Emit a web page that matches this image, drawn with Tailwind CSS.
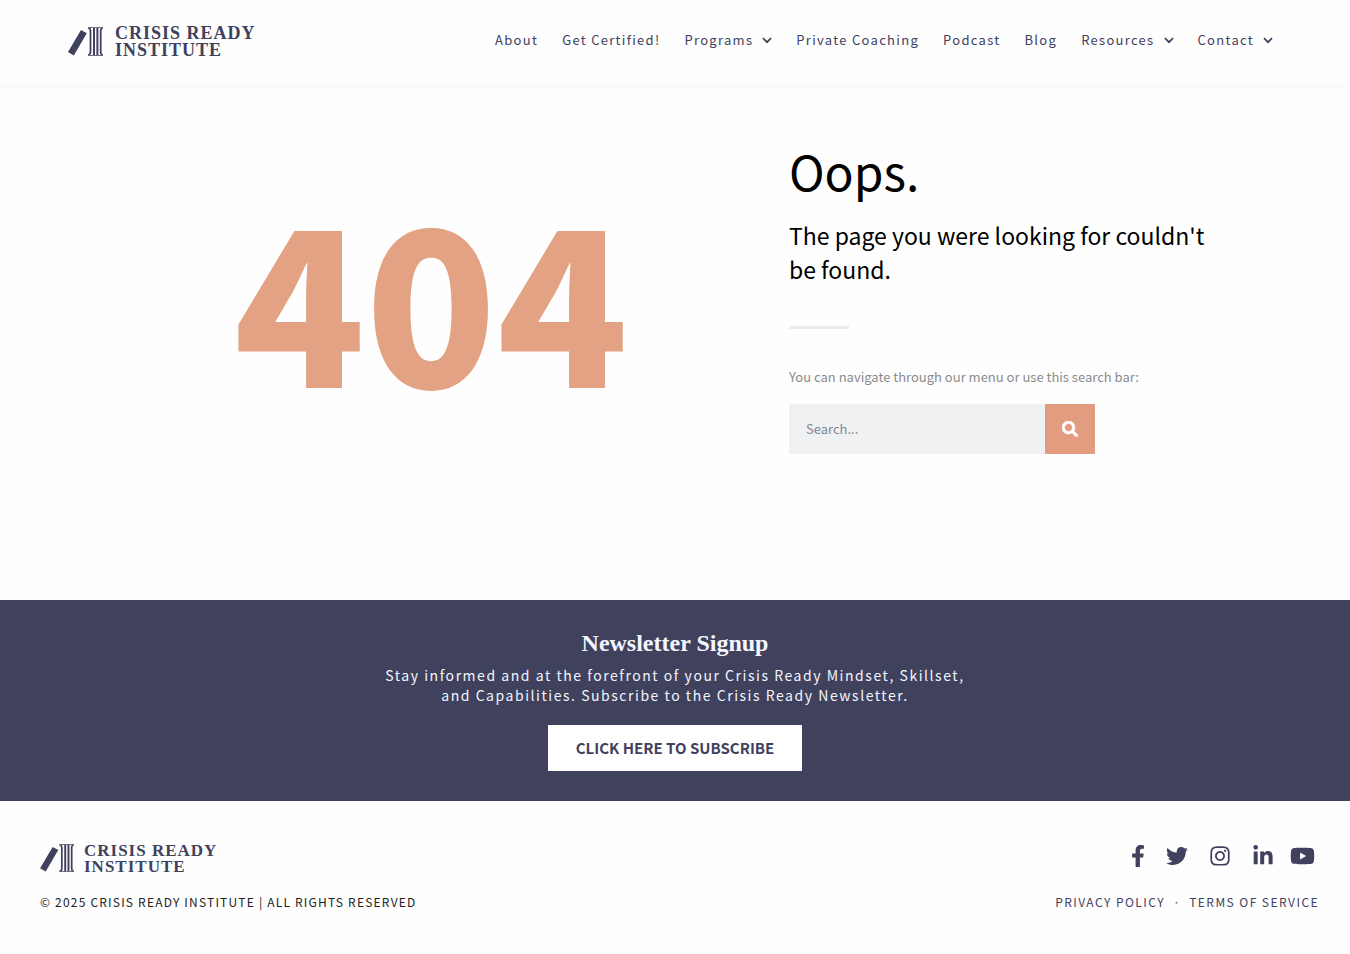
<!DOCTYPE html>
<html lang="en">
<head>
    <meta charset="UTF-8">
    <meta name="viewport" content="width=device-width, initial-scale=1.0">
    <title>Page not found - Crisis Ready Institute</title>
    <script src="https://cdn.jsdelivr.net/npm/@tailwindcss/browser@4"></script>
</head>
<body class="bg-[#fefefe] font-['Noto_Sans_CJK_JP','Noto_Sans',sans-serif] text-[#3f415d]">
    <svg class="hidden">
        <symbol id="pillar" viewBox="0 0 35 29">
            <path d="M13 3L18.800 6.300L5.800 28.500L0 25Z" fill="#3f415d"/>
            <path d="M20 .5Q22.500 1 22.500 4V25Q22.500 28 20 28.500M35 .5Q32.700 1 32.700 4V25Q32.700 28 35 28.500" stroke="#3f415d" stroke-width="1.800" fill="none"/>
            <path d="M26 0V29M29.400 0V29" stroke="#3f415d" stroke-width="2" fill="none"/>
            <path d="M20 .5H35M20 28.500H35" stroke="#6b6c84" stroke-width="1" fill="none"/>
        </symbol>
        <symbol id="chevron" viewBox="0 0 10 7">
            <path d="M1 1.200L5 5.200L9 1.200" stroke="currentColor" stroke-width="1.700" fill="none"/>
        </symbol>
    </svg>

    <header class="flex items-center justify-between h-[82px] pl-[68px] pr-[77px] shadow-[0_6px_0_#fbfbfb]">
        <a href="#" class="flex items-center gap-3">
            <svg class="w-[35px] h-[29px]"><use href="#pillar"/></svg>
            <span class="pt-0.5 font-['Liberation_Serif',serif] font-bold text-[18px] leading-[17px] tracking-[1px]">CRISIS READY<br>INSTITUTE</span>
        </a>
        <nav class="flex items-center gap-6 pb-0.5 text-[13px] leading-5 tracking-widest">
            <a href="#">About</a>
            <a href="#">Get Certified!</a>
            <a href="#" class="flex items-center gap-[9px]">Programs <svg class="w-[10px] h-[7px]"><use href="#chevron"/></svg></a>
            <a href="#">Private Coaching</a>
            <a href="#">Podcast</a>
            <a href="#">Blog</a>
            <a href="#" class="flex items-center gap-[9px]">Resources <svg class="w-[10px] h-[7px]"><use href="#chevron"/></svg></a>
            <a href="#" class="flex items-center gap-[9px]">Contact <svg class="w-[10px] h-[7px]"><use href="#chevron"/></svg></a>
        </nav>
    </header>

    <main class="grid grid-cols-[minmax(0,1fr)_488px] px-[73px] pt-[62px] pb-[146px]">
        <div class="text-center font-black text-[216px] leading-[300px] text-[#e3a283]">404</div>
        <div>
            <h1 class="text-[48px] leading-[52px] text-black">Oops.</h1>
            <h2 class="mt-[22px] max-w-[440px] text-[23px] leading-[34px] text-black">The page you were looking for couldn't be found.</h2>
            <div class="mt-10 w-[60px] h-[3px] bg-[#ececec]"></div>
            <p class="mt-[38px] text-[13px] leading-5 text-[#8b8b8b]">You can navigate through our menu or use this search bar:</p>
            <form class="mt-[17px] flex h-[50px] w-[306px]">
                <input type="search" aria-label="Search" placeholder="Search..." class="min-w-0 flex-1 bg-[#f0f1f2] px-[17px] text-[13px] placeholder:text-[#7f8792] outline-none">
                <button type="button" aria-label="Search" class="flex w-[50px] items-center justify-center bg-[#e49c80] text-white">
                    <svg class="size-4" viewBox="0 0 512 512" fill="currentColor" stroke="currentColor" stroke-width="18"><path d="M505 442.700L405.300 343c-4.500-4.500-10.600-7-17-7H372c27.600-35.300 44-79.700 44-128C416 93.100 322.900 0 208 0S0 93.100 0 208s93.100 208 208 208c48.300 0 92.700-16.400 128-44v16.300c0 6.400 2.500 12.500 7 17l99.700 99.700c9.400 9.400 24.600 9.400 33.900 0l28.300-28.300c9.400-9.400 9.400-24.600.1-34zM208 336c-70.700 0-128-57.200-128-128 0-70.700 57.200-128 128-128 70.700 0 128 57.200 128 128 0 70.700-57.200 128-128 128z"/></svg>
                </button>
            </form>
        </div>
    </main>

    <section class="flex flex-col items-center bg-[#3f415d] pt-[29px] pb-[30px] text-center text-[#f4f6ff]">
        <h3 class="font-['Liberation_Serif',serif] text-[24px] leading-[28px] font-bold">Newsletter Signup</h3>
        <p class="mt-2 max-w-[620px] text-[14px] leading-5 tracking-[0.11em]">Stay informed and at the forefront of your Crisis Ready Mindset, Skillset,<br>and Capabilities. Subscribe to the Crisis Ready Newsletter.</p>
        <button type="button" class="mt-5 h-[46px] bg-white px-7 text-[15px] font-bold text-[#3f415d]">CLICK HERE TO SUBSCRIBE</button>
    </section>

    <footer class="pt-10 pb-10 pl-10 pr-[31px]">
        <div class="flex items-center justify-between">
            <a href="#" class="flex items-center gap-[10px]">
                <svg class="w-[34px] h-[28px]"><use href="#pillar"/></svg>
                <span class="pt-0.5 font-['Liberation_Serif',serif] font-bold text-[17px] leading-4 tracking-[1px]">CRISIS READY<br>INSTITUTE</span>
            </a>
            <div class="flex items-center gap-4 pr-1 pb-1">
                <div class="flex items-center gap-[21px]">
                    <a href="#" aria-label="Facebook"><svg class="w-[14px] h-[22px]" viewBox="0 0 320 512" fill="currentColor"><path d="M279.14 288l14.22-92.66h-88.91v-60.13c0-25.35 12.42-50.06 52.24-50.06h40.42V6.26S260.43 0 225.36 0c-73.22 0-121.08 44.38-121.08 124.72v70.62H22.89V288h81.39v224h100.17V288z"/></svg></a>
                    <a href="#" aria-label="Twitter"><svg class="size-[22px]" viewBox="0 0 512 512" fill="currentColor"><path d="M459.37 151.716c.325 4.548.325 9.097.325 13.645 0 138.72-105.583 298.558-298.558 298.558-59.452 0-114.68-17.219-161.137-47.106 8.447.974 16.568 1.299 25.34 1.299 49.055 0 94.213-16.568 130.274-44.832-46.132-.975-84.792-31.188-98.112-72.772 6.498.974 12.995 1.624 19.818 1.624 9.421 0 18.843-1.3 27.614-3.573-48.081-9.747-84.143-51.98-84.143-102.985v-1.299c13.969 7.797 30.214 12.67 47.431 13.319-28.264-18.843-46.781-51.005-46.781-87.391 0-19.492 5.197-37.36 14.294-52.954 51.655 63.675 129.3 105.258 216.365 109.807-1.624-7.797-2.599-15.918-2.599-24.04 0-57.828 46.782-104.934 104.934-104.934 30.213 0 57.502 12.67 76.67 33.137 23.715-4.548 46.456-13.32 66.599-25.34-7.798 24.366-24.366 44.833-46.132 57.827 21.117-2.273 41.584-8.122 60.426-16.243-14.292 20.791-32.161 39.308-52.628 54.253z"/></svg></a>
                    <a href="#" aria-label="Instagram"><svg class="size-[22px]" viewBox="0 0 448 512" fill="currentColor"><path d="M224.1 141c-63.600 0-114.900 51.300-114.900 114.900s51.300 114.900 114.900 114.900S339 319.500 339 255.900 287.700 141 224.100 141zm0 189.600c-41.100 0-74.700-33.500-74.700-74.700s33.500-74.700 74.700-74.700 74.700 33.500 74.700 74.700-33.600 74.700-74.700 74.700zm146.400-194.300c0 14.900-12 26.800-26.800 26.800-14.900 0-26.800-12-26.800-26.800s12-26.800 26.800-26.800 26.800 12 26.800 26.800zm76.100 27.200c-1.700-35.900-9.900-67.700-36.200-93.900-26.200-26.200-58-34.400-93.900-36.200-37-2.100-147.900-2.100-184.900 0-35.800 1.700-67.600 9.900-93.900 36.100s-34.400 58-36.200 93.900c-2.100 37-2.100 147.900 0 184.900 1.700 35.900 9.900 67.700 36.200 93.900s58 34.400 93.900 36.200c37 2.100 147.900 2.100 184.900 0 35.900-1.700 67.700-9.900 93.900-36.200 26.200-26.200 34.400-58 36.200-93.900 2.100-37 2.100-147.800 0-184.800zM398.800 388c-7.800 19.600-22.900 34.700-42.600 42.600-29.500 11.700-99.500 9-132.100 9s-102.700 2.600-132.100-9c-19.600-7.800-34.700-22.900-42.600-42.600-11.700-29.500-9-99.500-9-132.100s-2.600-102.700 9-132.100c7.800-19.600 22.900-34.700 42.600-42.600 29.500-11.700 99.500-9 132.100-9s102.700-2.600 132.100 9c19.600 7.800 34.700 22.900 42.600 42.600 11.700 29.500 9 99.500 9 132.100s2.700 102.700-9 132.100z"/></svg></a>
                    <a href="#" aria-label="LinkedIn"><svg class="size-[22px]" viewBox="0 0 448 512" fill="currentColor"><path d="M100.280 448H7.400V148.900h92.880zM53.790 108.100C24.090 108.100 0 83.500 0 53.800a53.790 53.790 0 0 1 107.580 0c0 29.700-24.100 54.300-53.790 54.300zM447.900 448h-92.680V302.400c0-34.700-.7-79.200-48.290-79.200-48.290 0-55.690 37.700-55.690 76.700V448h-92.780V148.900h89.080v40.800h1.300c12.400-23.500 42.690-48.300 87.880-48.300 94 0 111.280 61.900 111.280 142.300V448z"/></svg></a>
                </div>
                <a href="#" aria-label="YouTube"><svg class="w-[25px] h-[22px]" viewBox="0 0 576 512" fill="currentColor"><path d="M549.655 124.083c-6.281-23.650-24.787-42.276-48.284-48.597C458.781 64 288 64 288 64S117.220 64 74.629 75.486c-23.497 6.322-42.003 24.947-48.284 48.597-11.412 42.867-11.412 132.305-11.412 132.305s0 89.438 11.412 132.305c6.281 23.650 24.787 41.500 48.284 47.821C117.220 448 288 448 288 448s170.780 0 213.371-11.486c23.497-6.321 42.003-24.171 48.284-47.821 11.412-42.867 11.412-132.305 11.412-132.305s0-89.438-11.412-132.305zm-317.510 213.508V175.185l142.739 81.205-142.739 81.201z"/></svg></a>
            </div>
        </div>
        <div class="mt-[17px] flex items-center justify-between text-[12px] leading-5">
            <p class="tracking-widest text-[#222]">© 2025 CRISIS READY INSTITUTE | ALL RIGHTS RESERVED</p>
            <p class="flex gap-2 tracking-[0.12em]"><a href="#">PRIVACY POLICY</a><span>·</span><a href="#">TERMS OF SERVICE</a></p>
        </div>
    </footer>
</body>
</html>
